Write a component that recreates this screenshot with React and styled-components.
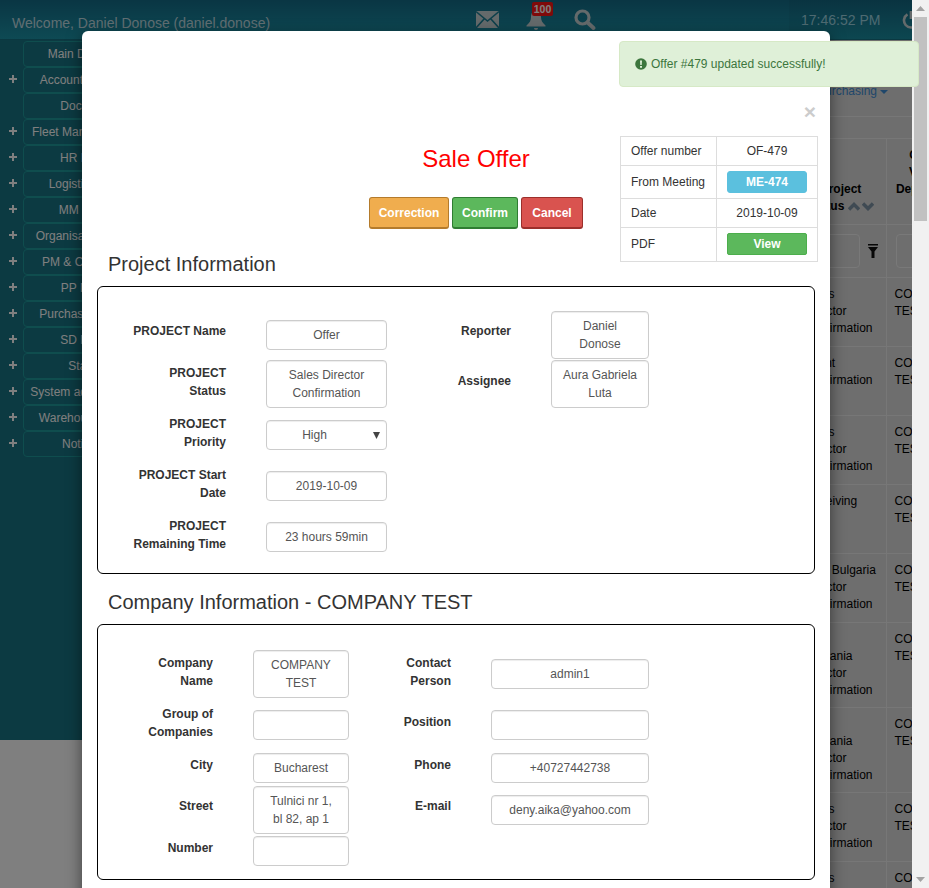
import React from "react";
import styled, { createGlobalStyle } from "styled-components";

const GlobalStyle = createGlobalStyle`
  html, body {
    margin: 0;
    height: 100%;
    overflow: hidden;
    background: #ffffff;
    font-family: "Liberation Sans", Arial, sans-serif;
    font-size: 12px;
    color: #333333;
  }
`;

const Shell = styled.div`
  position: relative;
  display: flex;
  width: 100%;
  height: 100vh;
  overflow: hidden;
`;

const Viewport = styled.div`
  position: relative;
  flex: 1;
  min-width: 0;
  display: flex;
  flex-direction: column;
  overflow: hidden;
`;

/* page behind the modal */
const TopBar = styled.header`
  flex: none;
  height: 39px;
  display: flex;
  align-items: center;
  background: linear-gradient(#146c88, #1c94a8);
  border-bottom: 1px solid #157082;
`;

const Welcome = styled.div`
  padding: 6px 0 0 12px;
  width: 460px;
  box-sizing: border-box;
  font-size: 14px;
  color: #c0dde4;
`;

const TopIcons = styled.div`
  display: flex;
  align-items: center;
  height: 100%;
`;

const IconSlot = styled.div`
  position: relative;
  width: ${({ $w }) => $w}px;
  margin-left: ${({ $ml }) => $ml}px;
  display: flex;
`;

const Badge = styled.span`
  position: absolute;
  top: -8px;
  left: 6px;
  width: 21px;
  height: 14px;
  border-radius: 2px;
  background: #ff1414;
  color: #ffffff;
  font-size: 10.5px;
  font-weight: bold;
  line-height: 14px;
  text-align: center;
`;

const ClockArea = styled.div`
  margin-left: auto;
  width: 123px;
  height: 100%;
  display: flex;
  align-items: center;
  box-sizing: border-box;
  padding-left: 12px;
  background: rgba(0, 0, 0, 0.04);
`;

const Clock = styled.span`
  font-size: 14px;
  color: #9cd4e2;
  white-space: nowrap;
`;

const PowerSlot = styled.span`
  display: flex;
  margin-left: 22px;
`;

const PageBody = styled.div`
  flex: 1;
  display: flex;
  min-height: 0;
`;

const Sidebar = styled.nav`
  flex: none;
  width: 150px;
  height: 700px;
  padding-top: 1px;
  box-sizing: border-box;
  background: #187484;
`;

const MenuRow = styled.div`
  display: flex;
  align-items: center;
  height: 26px;
`;

const PlusSlot = styled.span`
  flex: none;
  width: 23px;
  padding: 0 0 2px 9px;
  box-sizing: border-box;
  display: flex;
`;

const MenuButton = styled.div`
  width: 118px;
  height: 26px;
  box-sizing: border-box;
  border: 1px solid #1e9a9c;
  border-radius: 4px;
  color: #ffffff;
  line-height: 25px;
  text-align: center;
  white-space: nowrap;
`;

const Main = styled.main`
  flex: 1;
  min-width: 0;
  display: flex;
  flex-direction: column;
  background: #dcdcdc;
`;

const NavLine = styled.div`
  flex: none;
  height: 77px;
  box-sizing: border-box;
  padding: 43px 24px 0 0;
  display: flex;
  justify-content: flex-end;
  align-items: flex-start;
  gap: 3px;
  border-bottom: 1px solid #efefef;
`;

const NavLink = styled.span`
  color: #3f8fd6;
  line-height: 17px;
`;

const Caret = styled.span`
  margin-top: 7px;
  border: 4px solid transparent;
  border-top-color: #3f8fd6;
  border-bottom: 0;
`;

const Strip = styled.div`
  flex: none;
  height: 22px;
  box-sizing: border-box;
  border-bottom: 1px solid #efefef;
`;

const TableClip = styled.div`
  align-self: flex-end;
  margin-right: -60px;
`;

const DataTable = styled.table`
  border-collapse: collapse;
  table-layout: fixed;
  width: 176px;
  line-height: 17px;
  color: #000000;
`;

const HeadCell = styled.th`
  height: 85px;
  width: ${({ $w }) => $w}px;
  padding: 0 0 9px;
  box-sizing: border-box;
  font-weight: bold;
  text-align: center;
  vertical-align: bottom;
  border-left: 1px solid #efefef;
  border-bottom: 1px solid #efefef;
`;

const SortPair = styled.span`
  display: inline-flex;
  gap: 2px;
  margin-left: 4px;
  vertical-align: -1px;
`;

const FilterCell = styled.td`
  height: 53px;
  padding: 0 0 0 9px;
  box-sizing: border-box;
  border-left: 1px solid #efefef;
  border-bottom: 1px solid #efefef;
`;

const FilterWrap = styled.div`
  display: flex;
  align-items: center;
  gap: 8px;
`;

const FilterInput = styled.div`
  flex: ${({ $wide }) => ($wide ? "1" : "none")};
  width: 63px;
  margin-left: ${({ $wide }) => ($wide ? "0" : "-9px")};
  height: 34px;
  box-sizing: border-box;
  border: 1px solid #f2f2f2;
  border-radius: 4px;
`;

const BodyCell = styled.td`
  height: ${({ $tall }) => ($tall ? 85 : 69)}px;
  padding: 8px;
  box-sizing: border-box;
  vertical-align: top;
  white-space: pre;
  overflow: hidden;
  border-left: 1px solid #efefef;
  border-bottom: 1px solid #efefef;
`;

const Backdrop = styled.div`
  position: absolute;
  inset: 0;
  background: rgba(0, 0, 0, 0.5);
`;

/* modal */
const Modal = styled.section`
  position: absolute;
  top: 31px;
  left: 82px;
  width: 748px;
  height: 1000px;
  background: #ffffff;
  border-radius: 6px;
  box-shadow: 0 5px 15px rgba(0, 0, 0, 0.5);
`;

const CloseMark = styled.span`
  position: absolute;
  top: 70px;
  right: 14px;
  font-size: 21px;
  line-height: 21px;
  font-weight: bold;
  color: #cccccc;
`;

const TopRow = styled.div`
  height: 222px;
  box-sizing: border-box;
  padding: 105px 0 0 250px;
  display: flex;
  align-items: flex-start;
`;

const TitleCol = styled.div`
  width: 288px;
  padding-top: 10px;
  display: flex;
  flex-direction: column;
  align-items: center;
`;

const Title = styled.h1`
  margin: 0;
  font-size: 24px;
  font-weight: normal;
  line-height: 26px;
  color: #ff0000;
`;

const ActionRow = styled.div`
  margin-top: 25px;
  display: flex;
  gap: 3px;
`;

const ActionButton = styled.button`
  width: ${({ $w }) => $w}px;
  height: 32px;
  padding: 0;
  box-sizing: border-box;
  font: bold 12px "Liberation Sans", Arial, sans-serif;
  color: #ffffff;
  background: ${({ $bg }) => $bg};
  border: 1px solid ${({ $edge }) => $edge};
  border-bottom-width: 2px;
  border-radius: 3px;
`;

const InfoTable = styled.table`
  width: 198px;
  border-collapse: collapse;
  table-layout: fixed;
  line-height: 17px;
`;

const InfoKey = styled.td`
  width: 96px;
  height: ${({ $h }) => $h}px;
  padding: 0 10px;
  box-sizing: border-box;
  border: 1px solid #dddddd;
`;

const InfoValue = styled.td`
  padding: 0;
  text-align: center;
  border: 1px solid #dddddd;
`;

const InfoButton = styled.span`
  display: block;
  width: 80px;
  height: 22px;
  margin: ${({ $raised }) => ($raised ? "-2px auto 0" : "0 auto")};
  box-sizing: border-box;
  line-height: 21px;
  font-weight: bold;
  color: #ffffff;
  background: ${({ $bg }) => $bg};
  border: 1px solid ${({ $edge }) => $edge};
  border-radius: ${({ $raised }) => ($raised ? 2 : 3)}px;
`;

const SectionHeading = styled.h2`
  margin: ${({ $mt }) => $mt}px 0 11px 26px;
  font-size: 20px;
  font-weight: normal;
  line-height: 22px;
  color: #333333;
`;

const FormBox = styled.div`
  width: 718px;
  margin-left: 15px;
  box-sizing: border-box;
  padding: ${({ $pt }) => $pt}px 0 ${({ $pb }) => $pb}px;
  border: 1px solid #000000;
  border-radius: 6px;
`;

const FormRow = styled.div`
  display: grid;
  grid-template-columns: ${({ $cols }) => $cols};
  min-height: ${({ $h }) => $h}px;
  margin-top: ${({ $mt }) => $mt}px;
`;

const Label = styled.div`
  align-self: start;
  padding: ${({ $pad }) => $pad}px 40px 0 0;
  font-weight: bold;
  line-height: 18px;
  text-align: right;
  white-space: nowrap;
`;

const Field = styled.div`
  position: relative;
  align-self: center;
  box-sizing: border-box;
  min-height: 30px;
  padding: ${({ $select }) => ($select ? "5px 24px 5px 0" : "5px 6px")};
  line-height: 18px;
  text-align: center;
  color: #555555;
  border: 1px solid #cccccc;
  border-radius: 4px;
  box-shadow: inset 0 1px 1px rgba(0, 0, 0, 0.075);
`;

const SelectArrow = styled.svg`
  position: absolute;
  top: 11px;
  right: 6px;
`;

/* toast and scrollbar lie over everything */
const Toast = styled.div`
  position: absolute;
  top: 41px;
  left: 619px;
  width: 300px;
  height: 46px;
  box-sizing: border-box;
  padding-left: 15px;
  display: flex;
  align-items: center;
  gap: 4px;
  color: #3c763d;
  background: #dff0d8;
  border: 1px solid #d6e9c6;
  border-radius: 4px;
`;

const ScrollTrack = styled.aside`
  flex: none;
  width: 17px;
  height: 100%;
  display: flex;
  flex-direction: column;
  align-items: center;
  background: #f1f1f1;
`;

const ScrollArrow = styled.span`
  flex: none;
  height: 17px;
  display: flex;
  align-items: center;
  justify-content: center;
`;

const ScrollThumb = styled.div`
  width: 13px;
  height: 204px;
  background: #c1c1c1;
`;

const ScrollSpacer = styled.div`
  flex: 1;
`;

const EnvelopeIcon = () => (
  <svg width="23" height="19" viewBox="0 0 23 19">
    <path fill="#c8d4d6" d="M0 1h23v17H0z" />
    <path fill="none" stroke="#1a7f96" strokeWidth="1.6" d="M0 1.5l11.5 9.5L23 1.5M0 18l8.5-9.5M23 18l-8.5-9.5" />
  </svg>
);

const BellIcon = () => (
  <svg width="20" height="20" viewBox="0 0 20 20">
    <path fill="#c8d4d6" d="M10 1c3.5 0 5 2.6 5 6 0 3.6 1.5 6 4.5 8.5v1H.5v-1C3.5 13 5 10.6 5 7c0-3.4 1.5-6 5-6z" />
    <path fill="#c8d4d6" d="M8 18h4a2 2 0 0 1-4 0z" />
  </svg>
);

const SearchIcon = () => (
  <svg width="22" height="21" viewBox="0 0 22 21">
    <circle cx="8.5" cy="8.5" r="6.5" fill="none" stroke="#c8d4d6" strokeWidth="3.2" />
    <path stroke="#c8d4d6" strokeWidth="3.8" strokeLinecap="round" d="M13.5 13.5l6 5.5" />
  </svg>
);

const PowerIcon = () => (
  <svg width="18" height="18" viewBox="0 0 18 18">
    <path fill="none" stroke="#c8d4d6" strokeWidth="2.6" d="M5.5 3.4a7 7 0 1 0 7 0" />
    <path stroke="#c8d4d6" strokeWidth="2.6" d="M9 0v8" />
  </svg>
);

const PlusIcon = () => (
  <svg width="8" height="8" viewBox="0 0 8 8">
    <path fill="#ffffff" d="M3 0h2v3h3v2H5v3H3V5H0V3h3z" />
  </svg>
);

const ChevronIcon = ({ up }) => (
  <svg width="12" height="9" viewBox="0 0 12 9">
    <path fill="none" stroke="#7e94a6" strokeWidth="3.4" d={up ? "M1 7.5l5-5 5 5" : "M1 1.5l5 5 5-5"} />
  </svg>
);

const FunnelIcon = () => (
  <svg width="10" height="14" viewBox="0 0 10 14">
    <path fill="#111111" d="M0 0h10v1.5H0zM0 3h10L6.5 7.5V14h-3V7.5z" />
  </svg>
);

const AlertIcon = () => (
  <svg width="12" height="12" viewBox="0 0 12 12">
    <circle cx="6" cy="6" r="5.8" fill="#3c763d" />
    <path fill="#dff0d8" d="M5 2.5h2L6.7 7H5.3zM5 8h2v1.7H5z" />
  </svg>
);

const menuItems = [
  ["Main Display", false],
  ["Accounting Dep", true],
  ["Dockets", false],
  ["Fleet Management", true],
  ["HR Mod", true],
  ["Logistics Ltd", true],
  ["MM Mod", true],
  ["Organisation Unit", true],
  ["PM & Contacts", true],
  ["PP Mod", true],
  ["Purchasing Dep", true],
  ["SD Mod", true],
  ["Stats", true],
  ["System admin area", true],
  ["Warehouse Dep", true],
  ["Notices", true],
];

const tableRows = [
  ["Sales\nDirector\nConfirmation", "COMPANY\nTEST"],
  ["Client\nConfirmation", "COMPANY\nTEST"],
  ["Sales\nDirector\nConfirmation", "COMPANY\nTEST"],
  ["Receiving", "COMPANY\nTEST"],
  ["Sale Bulgaria\nDirector\nConfirmation", "COMPANY\nTEST"],
  ["SD\nRomania\nDirector\nConfirmation", "COMPANY\nTEST", true],
  ["SD\nRomania\nDirector\nConfirmation", "COMPANY\nTEST", true],
  ["Sales\nDirector\nConfirmation", "COMPANY\nTEST"],
  ["Sales\nDirector\nConfirmation", "COMPANY\nTEST"],
];

const PROJECT_COLS = "168px 121px 164px 98px";
const COMPANY_COLS = "155px 96px 142px 158px";

const TextLines = ({ lines }) =>
  lines.map((line, i) => (
    <React.Fragment key={line}>
      {i > 0 && <br />}
      {line}
    </React.Fragment>
  ));

const projectRows = [
  { h: 48, mt: 0, cells: [[["PROJECT Name"], 11, ["Offer"]], [["Reporter"], 11, ["Daniel", "Donose"]]] },
  { h: 48, mt: 1, cells: [[["PROJECT", "Status"], 4, ["Sales Director", "Confirmation"]], [["Assignee"], 12, ["Aura Gabriela", "Luta"]]] },
  { h: 48, mt: 3, select: true, cells: [[["PROJECT", "Priority"], 4, ["High"]]] },
  { h: 48, mt: 3, cells: [[["PROJECT Start", "Date"], 4, ["2019-10-09"]]] },
  { h: 48, mt: 3, cells: [[["PROJECT", "Remaining Time"], 4, ["23 hours 59min"]]] },
];

const companyRows = [
  { h: 48, mt: 0, cells: [[["Company", "Name"], 4, ["COMPANY", "TEST"]], [["Contact", "Person"], 4, ["admin1"]]] },
  { h: 48, mt: 3, cells: [[["Group of", "Companies"], 4, []], [["Position"], 12, []]] },
  { h: 30, mt: 4, cells: [[["City"], 3, ["Bucharest"]], [["Phone"], 3, ["+40727442738"]]] },
  { h: 48, mt: 3, cells: [[["Street"], 11, ["Tulnici nr 1,", "bl 82, ap 1"]], [["E-mail"], 11, ["deny.aika@yahoo.com"]]] },
  { h: 30, mt: 2, cells: [[["Number"], 3, []]] },
];

const FormRows = ({ rows, cols }) =>
  rows.map((row) => (
    <FormRow key={row.cells[0][0].join()} $cols={cols} $h={row.h} $mt={row.mt}>
      {row.cells.map(([label, pad, value]) => (
        <React.Fragment key={label.join()}>
          <Label $pad={pad}>
            <TextLines lines={label} />
          </Label>
          <Field $select={row.select}>
            <TextLines lines={value} />
            {row.select && (
              <SelectArrow width="7" height="7" viewBox="0 0 7 7">
                <path fill="#444444" d="M0 0h7L3.5 7z" />
              </SelectArrow>
            )}
          </Field>
        </React.Fragment>
      ))}
    </FormRow>
  ));

const App = () => {
  return (
    <Shell>
      <GlobalStyle />
      <Viewport>
        <TopBar>
          <Welcome>Welcome, Daniel Donose (daniel.donose)</Welcome>
          <TopIcons>
            <IconSlot $w={23} $ml={16}>
              <EnvelopeIcon />
            </IconSlot>
            <IconSlot $w={20} $ml={27}>
              <BellIcon />
              <Badge>100</Badge>
            </IconSlot>
            <IconSlot $w={22} $ml={28}>
              <SearchIcon />
            </IconSlot>
          </TopIcons>
          <ClockArea>
            <Clock>17:46:52 PM</Clock>
            <PowerSlot>
              <PowerIcon />
            </PowerSlot>
          </ClockArea>
        </TopBar>
        <PageBody>
          <Sidebar>
            {menuItems.map(([name, expandable]) => (
              <MenuRow key={name}>
                <PlusSlot>{expandable && <PlusIcon />}</PlusSlot>
                <MenuButton>{name}</MenuButton>
              </MenuRow>
            ))}
          </Sidebar>
          <Main>
            <NavLine>
              <NavLink>Purchasing</NavLink>
              <Caret />
            </NavLine>
            <Strip />
            <TableClip>
              <DataTable>
                <thead>
                  <tr>
                    <HeadCell $w={90}>
                      Project
                      <br />
                      Status
                      <SortPair>
                        <ChevronIcon up />
                        <ChevronIcon />
                      </SortPair>
                    </HeadCell>
                    <HeadCell $w={86}>
                      Clients
                      <br />
                      Vendor
                      <br />
                      Department
                      <br />
                      &nbsp;
                    </HeadCell>
                  </tr>
                  <tr>
                    <FilterCell>
                      <FilterWrap>
                        <FilterInput />
                        <FunnelIcon />
                      </FilterWrap>
                    </FilterCell>
                    <FilterCell>
                      <FilterWrap>
                        <FilterInput $wide />
                      </FilterWrap>
                    </FilterCell>
                  </tr>
                </thead>
                <tbody>
                  {tableRows.map(([status, company, tall], i) => (
                    <tr key={i}>
                      <BodyCell $tall={tall}>{status}</BodyCell>
                      <BodyCell $tall={tall}>{company}</BodyCell>
                    </tr>
                  ))}
                </tbody>
              </DataTable>
            </TableClip>
          </Main>
        </PageBody>
        <Backdrop />
        <Modal>
          <CloseMark>×</CloseMark>
          <TopRow>
            <TitleCol>
              <Title>Sale Offer</Title>
              <ActionRow>
                <ActionButton $w={80} $bg="#f0ad4e" $edge="#b47b2c">
                  Correction
                </ActionButton>
                <ActionButton $w={66} $bg="#5cb85c" $edge="#2f7d32">
                  Confirm
                </ActionButton>
                <ActionButton $w={62} $bg="#d9534f" $edge="#9c2f2b">
                  Cancel
                </ActionButton>
              </ActionRow>
            </TitleCol>
            <InfoTable>
              <tbody>
                <tr>
                  <InfoKey $h={29}>Offer number</InfoKey>
                  <InfoValue>OF-479</InfoValue>
                </tr>
                <tr>
                  <InfoKey $h={33}>From Meeting</InfoKey>
                  <InfoValue>
                    <InfoButton $bg="#5bc0de" $edge="#5bc0de">
                      ME-474
                    </InfoButton>
                  </InfoValue>
                </tr>
                <tr>
                  <InfoKey $h={29}>Date</InfoKey>
                  <InfoValue>2019-10-09</InfoValue>
                </tr>
                <tr>
                  <InfoKey $h={34}>PDF</InfoKey>
                  <InfoValue>
                    <InfoButton $raised $bg="#5cb85c" $edge="#4cae4c">
                      View
                    </InfoButton>
                  </InfoValue>
                </tr>
              </tbody>
            </InfoTable>
          </TopRow>
          <SectionHeading $mt={0}>Project Information</SectionHeading>
          <FormBox $pt={24} $pb={12}>
            <FormRows rows={projectRows} cols={PROJECT_COLS} />
          </FormBox>
          <SectionHeading $mt={17}>Company Information - COMPANY TEST</SectionHeading>
          <FormBox $pt={25} $pb={13}>
            <FormRows rows={companyRows} cols={COMPANY_COLS} />
          </FormBox>
        </Modal>
      </Viewport>
      <ScrollTrack>
        <ScrollArrow>
          <svg width="9" height="5" viewBox="0 0 9 5">
            <path fill="#a3a3a3" d="M4.5 0L9 5H0z" />
          </svg>
        </ScrollArrow>
        <ScrollThumb />
        <ScrollSpacer />
        <ScrollArrow>
          <svg width="9" height="5" viewBox="0 0 9 5">
            <path fill="#a3a3a3" d="M0 0h9L4.5 5z" />
          </svg>
        </ScrollArrow>
      </ScrollTrack>
      <Toast>
        <AlertIcon />
        Offer #479 updated successfully!
      </Toast>
    </Shell>
  );
};

export default App;
